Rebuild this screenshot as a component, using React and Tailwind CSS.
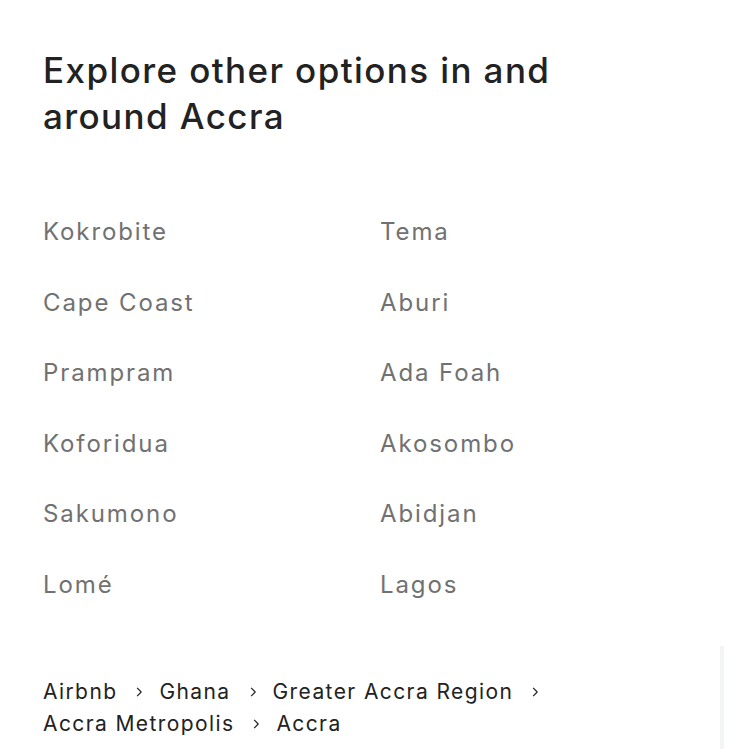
import React from "react";

const places = [
  ["Kokrobite", "Tema"],
  ["Cape Coast", "Aburi"],
  ["Prampram", "Ada Foah"],
  ["Koforidua", "Akosombo"],
  ["Sakumono", "Abidjan"],
  ["Lomé", "Lagos"],
];

const crumbs = ["Airbnb", "Ghana", "Greater Accra Region", "Accra Metropolis", "Accra"];

const Chevron = () => (
  <svg viewBox="0 0 32 32" className="w-[12px] h-[12px] ml-[16px] mr-[14px] inline-block" fill="none" stroke="#222" strokeWidth="3.2">
    <path d="M11 5l10.3 10.3a1 1 0 0 1 0 1.4L11 27" />
  </svg>
);

const App = () => {
  return (
    <div className="relative min-h-[749px] bg-white px-[43px] pt-[47px] font-['Inter',sans-serif] text-[#222]">
      {/* Heading */}
      <h2 className="text-[35px] leading-[46px] font-medium tracking-[1.4px] w-[570px]">
        Explore other options in and around Accra
      </h2>

      {/* Places grid */}
      <div className="grid grid-cols-[337px_1fr] mt-[75px] w-[644px]">
        {places.map(([a, b]) => (
          <React.Fragment key={a}>
            <div className="h-[70.6px] text-[24px] tracking-[1.9px] text-[#717171]">{a}</div>
            <div className="h-[70.6px] text-[24px] tracking-[1.9px] text-[#717171]">{b}</div>
          </React.Fragment>
        ))}
      </div>

      {/* Breadcrumbs */}
      <div className="mt-[38px] w-[600px] text-[21px] leading-[32px] tracking-[1.4px]">
        {crumbs.map((c, i) => (
          <span key={c} className="inline-flex items-center">
            {c}
            {i < crumbs.length - 1 && <Chevron />}
          </span>
        ))}
      </div>

      <div className="absolute right-[6px] top-[646px] bottom-0 w-[4px] bg-gray-100" />
    </div>
  );
};

export default App;
